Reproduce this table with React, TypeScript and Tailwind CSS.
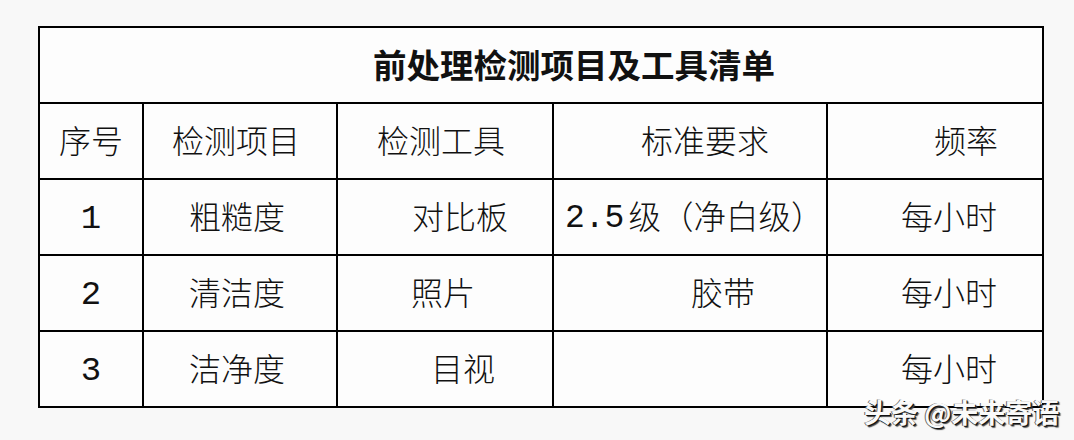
const cjk = "font-['Noto_Sans_CJK_SC','Noto_Sans',sans-serif]";
const mono = "font-['Liberation_Mono','Noto_Sans_CJK_SC',monospace]";

type Cell = { text: string; pl?: string; center?: boolean; digit?: boolean };

const header: Cell[] = [
  { text: "序号", center: true },
  { text: "检测项目", pl: "pl-[28px]" },
  { text: "检测工具", pl: "pl-[39px]" },
  { text: "标准要求", pl: "pl-[87px]" },
  { text: "频率", pl: "pl-[106px]" },
];

const rows: Cell[][] = [
  [
    { text: "1", center: true, digit: true },
    { text: "粗糙度", pl: "pl-[45px]" },
    { text: "对比板", pl: "pl-[74px]" },
    { text: "", pl: "pl-[11px]" },
    { text: "每小时", pl: "pl-[73px]" },
  ],
  [
    { text: "2", center: true, digit: true },
    { text: "清洁度", pl: "pl-[45px]" },
    { text: "照片", pl: "pl-[73px]" },
    { text: "胶带", pl: "pl-[137px]" },
    { text: "每小时", pl: "pl-[73px]" },
  ],
  [
    { text: "3", center: true, digit: true },
    { text: "洁净度", pl: "pl-[45px]" },
    { text: "目视", pl: "pl-[93px]" },
    { text: "" },
    { text: "每小时", pl: "pl-[73px]" },
  ],
];

function TableCell({ cell, children }: { cell: Cell; children?: React.ReactNode }) {
  return (
    <div
      className={`flex items-center bg-[#fdfdfd] text-[#111] ${
        cell.center ? "justify-center" : cell.pl ?? ""
      } ${cell.digit ? `${mono} pt-[4px] text-[34px]` : `${cjk} pb-[4px] text-[32px] font-light`}`}
    >
      {children ?? cell.text}
    </div>
  );
}

export default function App() {
  return (
    <div className="relative h-[440px] w-[1074px] overflow-hidden bg-[#f8f8f8]">
      <div className="ml-[38px] mt-[26px] w-[1006px] bg-black p-[2px]">
        <div className="grid grid-cols-[102px_192px_214px_272px_214px] auto-rows-[74px] gap-[2px]">
          {/* title row */}
          <div
            className={`col-span-5 flex items-center pl-[333px] pb-[2px] bg-[#fdfdfd] text-[33.5px] font-bold text-[#111] ${cjk}`}
          >
            前处理检测项目及工具清单
          </div>

          {header.map((c, i) => (
            <TableCell key={"h" + i} cell={c} />
          ))}

          {rows.map((r, ri) =>
            r.map((c, ci) =>
              ri === 0 && ci === 3 ? (
                <TableCell key={ri + "-" + ci} cell={c}>
                  <span className={`${mono} pt-[8px] text-[33px]`}>2.5</span>
                  <span className={`${cjk} ml-[4px] text-[32.5px]`}>级（净白级）</span>
                </TableCell>
              ) : (
                <TableCell key={ri + "-" + ci} cell={c} />
              )
            )
          )}
        </div>
      </div>

      {/* watermark */}
      <div
        className={`absolute left-[864px] top-[395px] text-[27px] leading-[34px] font-bold text-[#fafafa] [text-shadow:1px_1px_0_#111,2px_2px_1px_#444,-1px_0_0_#666] ${cjk}`}
      >
        头条 @未来寄语
      </div>
    </div>
  );
}
